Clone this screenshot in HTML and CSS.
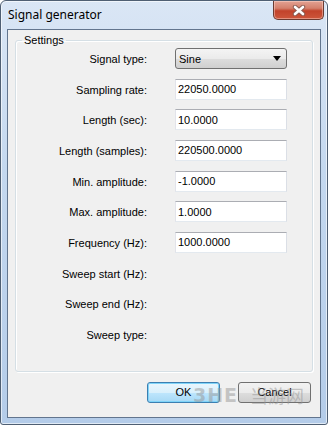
FILE: index.html
```html
<!DOCTYPE html>
<html lang="en">

<head>
    <meta charset="UTF-8">
    <title>Signal generator</title>
<link rel="stylesheet" href="styles.css">
</head>

<body>
    <div class="window">
        <!-- title bar -->
        <div class="titlebar">
            <span class="title">Signal generator</span>
            <div class="close">
                <svg width="14" height="11" viewBox="0 0 14 11">
                    <path d="M3 2 L11 9 M11 2 L3 9" stroke="#8a5a50" stroke-width="4.4" stroke-linecap="round" fill="none" />
                    <path d="M3 2 L11 9 M11 2 L3 9" stroke="#ffffff" stroke-width="2.6" stroke-linecap="round" fill="none" />
                </svg>
            </div>
        </div>

        <div class="client">
            <fieldset class="group">
                <legend>Settings</legend>
                <div class="rows">
                    <label>Signal type:</label>
                    <div class="combo"><span>Sine</span><span class="arrow"></span></div>

                    <label>Sampling rate:</label>
                    <input type="text" class="edit" value="22050.0000">

                    <label>Length (sec):</label>
                    <input type="text" class="edit" value="10.0000">

                    <label>Length (samples):</label>
                    <input type="text" class="edit" value="220500.0000">

                    <label>Min. amplitude:</label>
                    <input type="text" class="edit" value="-1.0000">

                    <label>Max. amplitude:</label>
                    <input type="text" class="edit" value="1.0000">

                    <label>Frequency (Hz):</label>
                    <input type="text" class="edit" value="1000.0000">

                    <label>Sweep start (Hz):</label>
                    <span></span>

                    <label>Sweep end (Hz):</label>
                    <span></span>

                    <label>Sweep type:</label>
                    <span></span>
                </div>
            </fieldset>

            <div class="buttons">
                <button type="button" class="btn default">OK</button>
                <button type="button" class="btn">Cancel</button>
            </div>
        </div>

        <!-- watermark over the buttons -->
        <div class="watermark"><span class="wm-logo">3HE</span><span class="wm-cn">当游网</span></div>
    </div>
</body>

</html>
```

FILE: styles.css
```css
* {
    margin: 0;
    padding: 0;
    box-sizing: border-box;
}

body {
    font-family: "Liberation Sans", Arial, sans-serif;
    font-size: 11px;
    color: #000;
    background-color: #fff;
}

.window {
    position: relative;
    width: 328px;
    height: 425px;
    border: 1px solid #4f5f73;
    border-radius: 6px 6px 3px 3px;
    background: linear-gradient(to bottom, #dae6f5 0%, #c4d8ef 40%, #b4cce9 100%);
    box-shadow: inset 0 0 0 1px rgba(255, 255, 255, 0.6);
    padding: 0 6px 6px;
    display: flex;
    flex-direction: column;
}

.titlebar {
    height: 28px;
    display: flex;
    justify-content: space-between;
    align-items: flex-start;
    padding-left: 1px;
    margin-right: -3px;
}

.title {
    font-family: "Noto Sans", "Open Sans", sans-serif;
    font-size: 12px;
    line-height: 16px;
    margin-top: 6px;
}

.close {
    width: 51px;
    height: 19px;
    border: 1px solid #6b3b31;
    border-top: none;
    border-radius: 0 0 5px 5px;
    background: linear-gradient(to bottom, #e3a293 0%, #d4806c 40%, #c2432b 55%, #cd563b 100%);
    box-shadow: inset 0 0 0 1px rgba(255, 220, 210, 0.45);
    display: flex;
    align-items: center;
    justify-content: center;
}

.client {
    flex: 1;
    background-color: #f0f0f0;
    border: 1px solid #62758e;
}

.group {
    margin: 4px 7px 0;
    border: 1px solid #d5dfe5;
    border-radius: 3px;
    box-shadow: inset 1px 1px 0 #fff, 1px 1px 0 #fff;
    padding: 0 0 26px;
}

.group legend {
    margin-left: 6px;
    padding: 0 2px;
    line-height: 13px;
}

.rows {
    display: grid;
    grid-template-columns: 131px 112px;
    grid-auto-rows: 21px;
    column-gap: 28px;
    row-gap: 9.67px;
    margin-top: 1px;
}

.rows label {
    align-self: center;
    text-align: right;
    padding-top: 1px;
    white-space: nowrap;
}

.edit {
    width: 112px;
    height: 21px;
    border: 1px solid;
    border-color: #abadb3 #dbdfe6 #e3e9ef #e2e3ea;
    background-color: #fff;
    padding: 0 2px;
    font-family: inherit;
    font-size: 11px;
    color: #000;
    outline: none;
}

.combo {
    height: 21px;
    border: 1px solid #707070;
    border-radius: 3px;
    background: linear-gradient(to bottom, #f4f4f4 0%, #ebebeb 50%, #dddddd 51%, #cfcfcf 100%);
    display: flex;
    align-items: center;
    justify-content: space-between;
    padding: 0 5px 0 3px;
}

.arrow {
    width: 0;
    height: 0;
    border-left: 4px solid transparent;
    border-right: 4px solid transparent;
    border-top: 5px solid #000;
}

.buttons {
    display: flex;
    justify-content: flex-end;
    gap: 18px;
    margin-top: 10px;
    padding-right: 9px;
}

.btn {
    width: 73px;
    height: 21px;
    border: 1px solid #707070;
    border-radius: 3px;
    background: linear-gradient(to bottom, #f2f2f2 0%, #ebebeb 50%, #dddddd 51%, #cfcfcf 100%);
    font-family: inherit;
    font-size: 11px;
    color: #000;
}

.btn.default {
    border-color: #3c7fb1;
    background: linear-gradient(to bottom, #eaf6fd 0%, #d9f0fc 50%, #bee6fd 51%, #a7d9f5 100%);
    box-shadow: inset 0 0 0 1px #7fd4f9;
}

.watermark {
    position: absolute;
    left: 192px;
    top: 381px;
    display: flex;
    align-items: center;
    gap: 12px;
    color: rgba(150, 150, 150, 0.5);
    pointer-events: none;
}

.wm-logo {
    font-family: "DejaVu Sans", sans-serif;
    font-weight: bold;
    font-size: 19px;
    letter-spacing: 1px;
}

.wm-cn {
    font-family: "Noto Sans CJK SC", sans-serif;
    font-size: 18px;
}
```
